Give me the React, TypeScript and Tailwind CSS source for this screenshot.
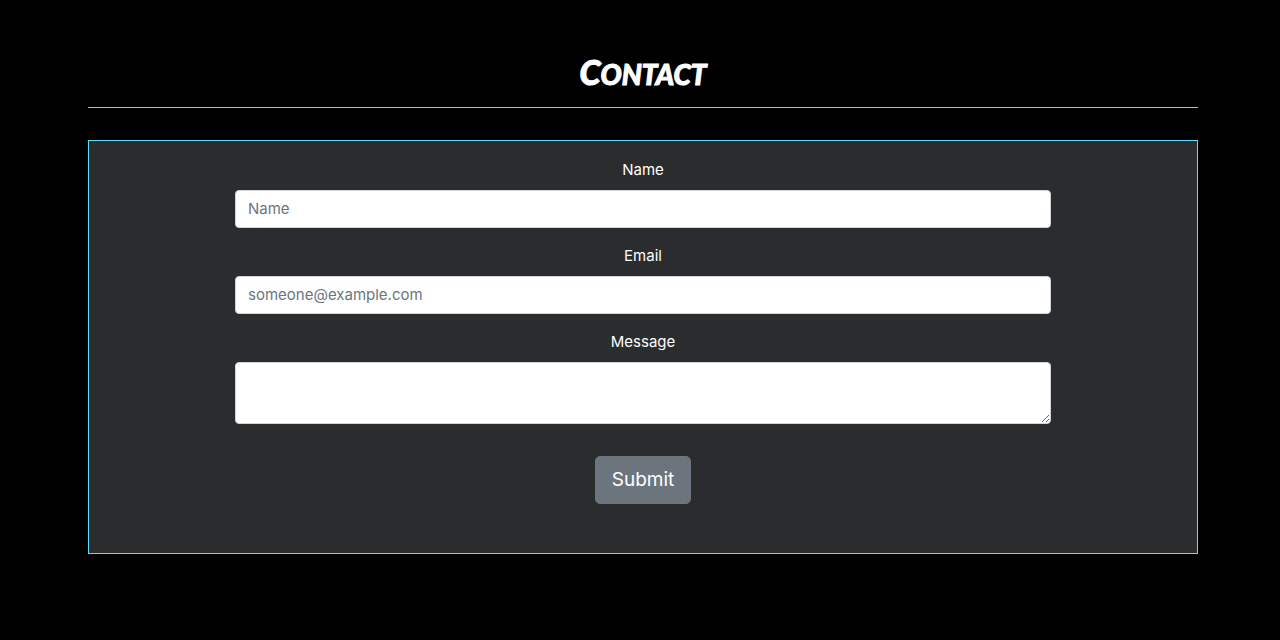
import type { ReactNode } from "react";

const control =
  "block w-full rounded border border-[#ced4da] bg-white px-3 py-1.5 text-[15px] leading-6 text-[#495057] placeholder:text-[#6c757d] placeholder:opacity-100";

function Field({ id, label, children }: { id: string; label: string; children: ReactNode }) {
  return (
    <div className="flex flex-col gap-2">
      <label htmlFor={id} className="text-center text-[15px] leading-6 text-white">
        {label}
      </label>
      {children}
    </div>
  );
}

export default function App() {
  return (
    <main className="min-h-screen bg-black pt-12 pr-[82px] pb-12 pl-[88px] font-['Inter','Liberation_Sans',sans-serif]">
      <section className="mx-auto flex max-w-[1110px] flex-col gap-8">
        <h2 className="h-[60px] border-b border-[#61dafb] text-center font-['Lato',sans-serif] text-[28px] leading-[48px] font-black text-white uppercase italic [-webkit-text-stroke:1px_white] first-letter:text-[34px]">
          Contact
        </h2>
        <form
          className="border border-[#61dafb] bg-[#2b2c2e] px-4 pt-[17px] pb-[49px] lg:px-[146px]"
          onSubmit={(event) => event.preventDefault()}
        >
          <div className="flex flex-col gap-4">
            <Field id="name" label="Name">
              <input id="name" type="text" placeholder="Name" className={control} />
            </Field>
            <Field id="email" label="Email">
              <input id="email" type="email" placeholder="someone@example.com" className={control} />
            </Field>
            <Field id="message" label="Message">
              <textarea id="message" rows={2} className={control} />
            </Field>
          </div>
          <div className="mt-8 flex justify-center">
            <button
              type="submit"
              className="rounded-[5px] border border-[#6c757d] bg-[#6c757d] px-4 py-2 text-[19px] leading-[30px] text-white"
            >
              Submit
            </button>
          </div>
        </form>
      </section>
    </main>
  );
}
